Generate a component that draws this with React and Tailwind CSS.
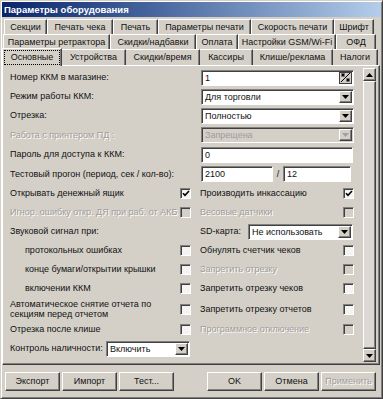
import React from "react";

const sunken =
  "border border-t-[#808080] border-l-[#808080] border-b-white border-r-white shadow-[inset_1px_1px_#404040]";
const raised =
  "border border-t-white border-l-white border-b-[#404040] border-r-[#404040] shadow-[inset_-1px_-1px_#808080]";

const Check = ({ checked, disabled }) => (
  <span
    className={`flex h-[11px] w-[11px] shrink-0 items-center justify-center ${sunken} ${
      disabled ? "bg-[#d4d0c8]" : "bg-[#f5f4f2]"
    }`}
  >
    {checked && (
      <svg width="8" height="7" viewBox="0 0 8 7">
        <path d="M1 3.2 L3 5.3 L7 1" fill="none" stroke="#000" strokeWidth="1.6" />
      </svg>
    )}
  </span>
);

const Arrow = ({ up, disabled }) => (
  <svg width="7" height="4" viewBox="0 0 7 4">
    <polygon
      points={up ? "0,4 7,4 3.5,0" : "0,0 7,0 3.5,4"}
      fill={disabled ? "#a0a0a0" : "#000"}
    />
  </svg>
);

const Select = ({ value, disabled, className = "w-[153px]" }) => (
  <div
    className={`flex h-[16px] items-center p-[1px] ${sunken} ${className} ${
      disabled ? "bg-[#d4d0c8] text-[#a09d98]" : "bg-white"
    }`}
  >
    <span className="flex-1 pl-[2px] pt-[1px]">{value}</span>
    <span
      className={`flex h-[12px] w-[13px] items-center justify-center bg-[#d4d0c8] ${raised}`}
    >
      <Arrow disabled={disabled} />
    </span>
  </div>
);

const Field = ({ value, className = "w-[153px]", children }) => (
  <div className={`flex h-[16px] items-center bg-white p-[1px] ${sunken} ${className}`}>
    <span className="flex-1 pl-[2px] pt-[1px]">{value}</span>
    {children}
  </div>
);

const Dis = ({ children, className = "" }) => (
  <span className={`text-[#a09d98] [text-shadow:1px_1px_0_#fff] ${className}`}>{children}</span>
);

const CheckCell = ({ label, checked, disabled, indent, width = "w-[181px]" }) => (
  <div className={`flex shrink-0 items-center ${width}`}>
    <span className={`flex-1 ${indent ? "pl-[15px]" : ""}`}>
      {disabled ? <Dis>{label}</Dis> : label}
    </span>
    <Check checked={checked} disabled={disabled} />
  </div>
);

const tabRows = [
  {
    ml: "ml-[2px]",
    tabs: [
      ["Секции", "w-[43px]"],
      ["Печать чека", "w-[66px]"],
      ["Печать", "w-[45px]"],
      ["Параметры печати", "w-[93px]"],
      ["Скорость печати", "w-[83px]"],
      ["Шрифт", "w-[40px]"],
    ],
  },
  {
    ml: "ml-[1px]",
    tabs: [
      ["Параметры ретрактора", "w-[107px]"],
      ["Скидки/надбавки", "w-[86px]"],
      ["Оплата", "w-[42px]"],
      ["Настройки GSM/Wi-Fi", "w-[98px]"],
      ["ОФД", "w-[40px]"],
    ],
  },
];

const lastRow = [
  ["Устройства", "w-[64px]"],
  ["Скидки/время", "w-[74px]"],
  ["Кассиры", "w-[53px]"],
  ["Клише/реклама", "w-[80px]"],
  ["Налоги", "w-[45px]"],
];

const Btn = ({ children, disabled }) => (
  <button
    className={`flex h-[19px] w-[55px] items-center justify-center bg-[#d4d0c8] ${raised}`}
  >
    {disabled ? <Dis>{children}</Dis> : children}
  </button>
);

export default function App() {
  return (
    <div className="h-[399px] w-[383px] overflow-hidden border border-t-[#d4d0c8] border-l-[#d4d0c8] border-b-[#404040] border-r-[#404040] bg-[#d4d0c8] p-[1px] font-['Liberation_Sans',Arial,sans-serif] text-[9px] leading-none text-[#111] shadow-[inset_1px_1px_#fff,inset_-1px_-1px_#808080]">
      {/* title bar */}
      <div className="flex h-[15px] items-center bg-gradient-to-r from-[#0a246a] to-[#b4cdea] pl-[2px] text-[9.5px] font-bold text-white">
        Параметры оборудования
      </div>

      {/* tabs */}
      <div className="mt-[2px]">
        {tabRows.map((row, i) => (
          <div key={i} className={`flex h-[15px] ${row.ml}`}>
            {row.tabs.map(([t, w]) => (
              <div
                key={t}
                className={`flex h-[15px] items-center justify-center border-l border-t border-r border-l-white border-t-white border-r-[#404040] shadow-[inset_-1px_0_#808080] ${w}`}
              >
                {t}
              </div>
            ))}
          </div>
        ))}
        <div className="flex h-[16px] items-end">
          <div className="relative z-10 -mb-[1px] flex h-[18px] w-[60px] items-center justify-center border-l border-t border-r border-l-white border-t-white border-r-[#404040] bg-[#d4d0c8] shadow-[inset_-1px_0_#808080]">
            <span className="flex h-[15px] w-[56px] items-center justify-center border border-dotted border-black">
              Основные
            </span>
          </div>
          {lastRow.map(([t, w]) => (
            <div
              key={t}
              className={`flex h-[16px] items-center justify-center border-t border-r border-t-white border-r-[#404040] shadow-[inset_-1px_0_#808080] ${w}`}
            >
              {t}
            </div>
          ))}
        </div>
      </div>

      {/* panel */}
      <div className="flex h-[300px] w-[378px] border border-t-white border-l-white border-b-[#404040] border-r-[#404040] shadow-[inset_-1px_-1px_#808080]">
        <div className="w-[360px] pl-[7px] pt-[2px]">
          <div className="flex h-[19px] items-center">
            <span className="w-[191px]">Номер ККМ в магазине:</span>
            <Field value="1">
              <span className="flex h-[12px] w-[13px] items-center justify-center border border-[#404040] bg-[#d4d0c8]">
                <svg width="11" height="11" viewBox="0 0 11 11">
                  <line x1="1" y1="10" x2="10" y2="1" stroke="#000" strokeWidth="1" />
                  <path d="M3 1v4M1 3h4M1.6 1.6l2.8 2.8M4.4 1.6l-2.8 2.8" stroke="#000" strokeWidth="0.9" />
                  <path d="M8 6v4M6 8h4M6.6 6.6l2.8 2.8M9.4 6.6l-2.8 2.8" stroke="#000" strokeWidth="0.9" />
                </svg>
              </span>
            </Field>
          </div>
          <div className="flex h-[19px] items-center">
            <span className="w-[191px]">Режим работы ККМ:</span>
            <Select value="Для торговли" />
          </div>
          <div className="flex h-[19px] items-center">
            <span className="w-[191px]">Отрезка:</span>
            <Select value="Полностью" />
          </div>
          <div className="flex h-[20px] items-center">
            <span className="w-[191px]">
              <Dis>Работа с принтером ПД :</Dis>
            </span>
            <Select value="Запрещена" disabled />
          </div>
          <div className="flex h-[19px] items-center">
            <span className="w-[191px]">Пароль для доступа к ККМ:</span>
            <Field value="0" className="w-[152px]" />
          </div>
          <div className="flex h-[20px] items-center">
            <span className="w-[191px]">Тестовый прогон (период, сек / кол-во):</span>
            <Field value="2100" className="w-[72px]" />
            <span className="w-[10px] text-center">/</span>
            <Field value="12" className="w-[68px]" />
          </div>

          <div className="flex h-[19px] items-center">
            <CheckCell label="Открывать денежный ящик" checked />
            <span className="w-[9px]" />
            <CheckCell label="Производить инкассацию" checked width="w-[154px]" />
          </div>
          <div className="flex h-[19px] items-center">
            <CheckCell label="Игнор. ошибку откр. ДЯ при раб. от АКБ" disabled />
            <span className="w-[9px]" />
            <CheckCell label="Весовые датчики" disabled width="w-[154px]" />
          </div>
          <div className="flex h-[19px] items-center">
            <span className="w-[190px]">Звуковой сигнал при:</span>
            <span className="w-[48px]">SD-карта:</span>
            <Select value="Не использовать" className="w-[105px]" />
          </div>
          <div className="flex h-[19px] items-center">
            <CheckCell label="протокольных ошибках" indent />
            <span className="w-[9px]" />
            <CheckCell label="Обнулять счетчик чеков" width="w-[154px]" />
          </div>
          <div className="flex h-[19px] items-center">
            <CheckCell label="конце бумаги/открытии крышки" indent />
            <span className="w-[9px]" />
            <CheckCell label="Запретить отрезку" disabled width="w-[154px]" />
          </div>
          <div className="flex h-[19px] items-center">
            <CheckCell label="включении ККМ" indent />
            <span className="w-[9px]" />
            <CheckCell label="Запретить отрезку чеков" width="w-[154px]" />
          </div>
          <div className="flex h-[22px] items-center">
            <div className="flex w-[181px] items-center">
              <span className="flex-1 leading-[10px]">
                Автоматическое снятие отчета по
                <br />
                секциям перед отчетом
              </span>
              <Check />
            </div>
            <span className="w-[9px]" />
            <CheckCell label="Запретить отрезку отчетов" width="w-[154px]" />
          </div>
          <div className="flex h-[19px] items-center">
            <CheckCell label="Отрезка после клише" />
            <span className="w-[9px]" />
            <CheckCell label="Программное отключение" disabled width="w-[154px]" />
          </div>
          <div className="flex h-[19px] items-center">
            <span className="w-[96px]">Контроль наличности:</span>
            <Select value="Включить" className="w-[84px]" />
          </div>
        </div>

        {/* scrollbar */}
        <div className="mt-[2px] mb-[2px] flex w-[13px] flex-col">
          <div className={`flex h-[13px] items-center justify-center bg-[#d4d0c8] ${raised}`}>
            <Arrow up />
          </div>
          <div className={`flex-1 bg-[#dcd9d4] ${raised}`} />
          <div className={`flex h-[13px] items-center justify-center bg-[#d4d0c8] ${raised}`}>
            <Arrow />
          </div>
        </div>
      </div>

      {/* buttons */}
      <div className="mt-[7px] flex px-[3px]">
        <div className="flex gap-[2px]">
          <Btn>Экспорт</Btn>
          <Btn>Импорт</Btn>
          <Btn>Тест...</Btn>
        </div>
        <div className="ml-auto mr-[2px] flex gap-[2px]">
          <Btn>OK</Btn>
          <Btn>Отмена</Btn>
          <Btn disabled>Применить</Btn>
        </div>
      </div>
    </div>
  );
}
